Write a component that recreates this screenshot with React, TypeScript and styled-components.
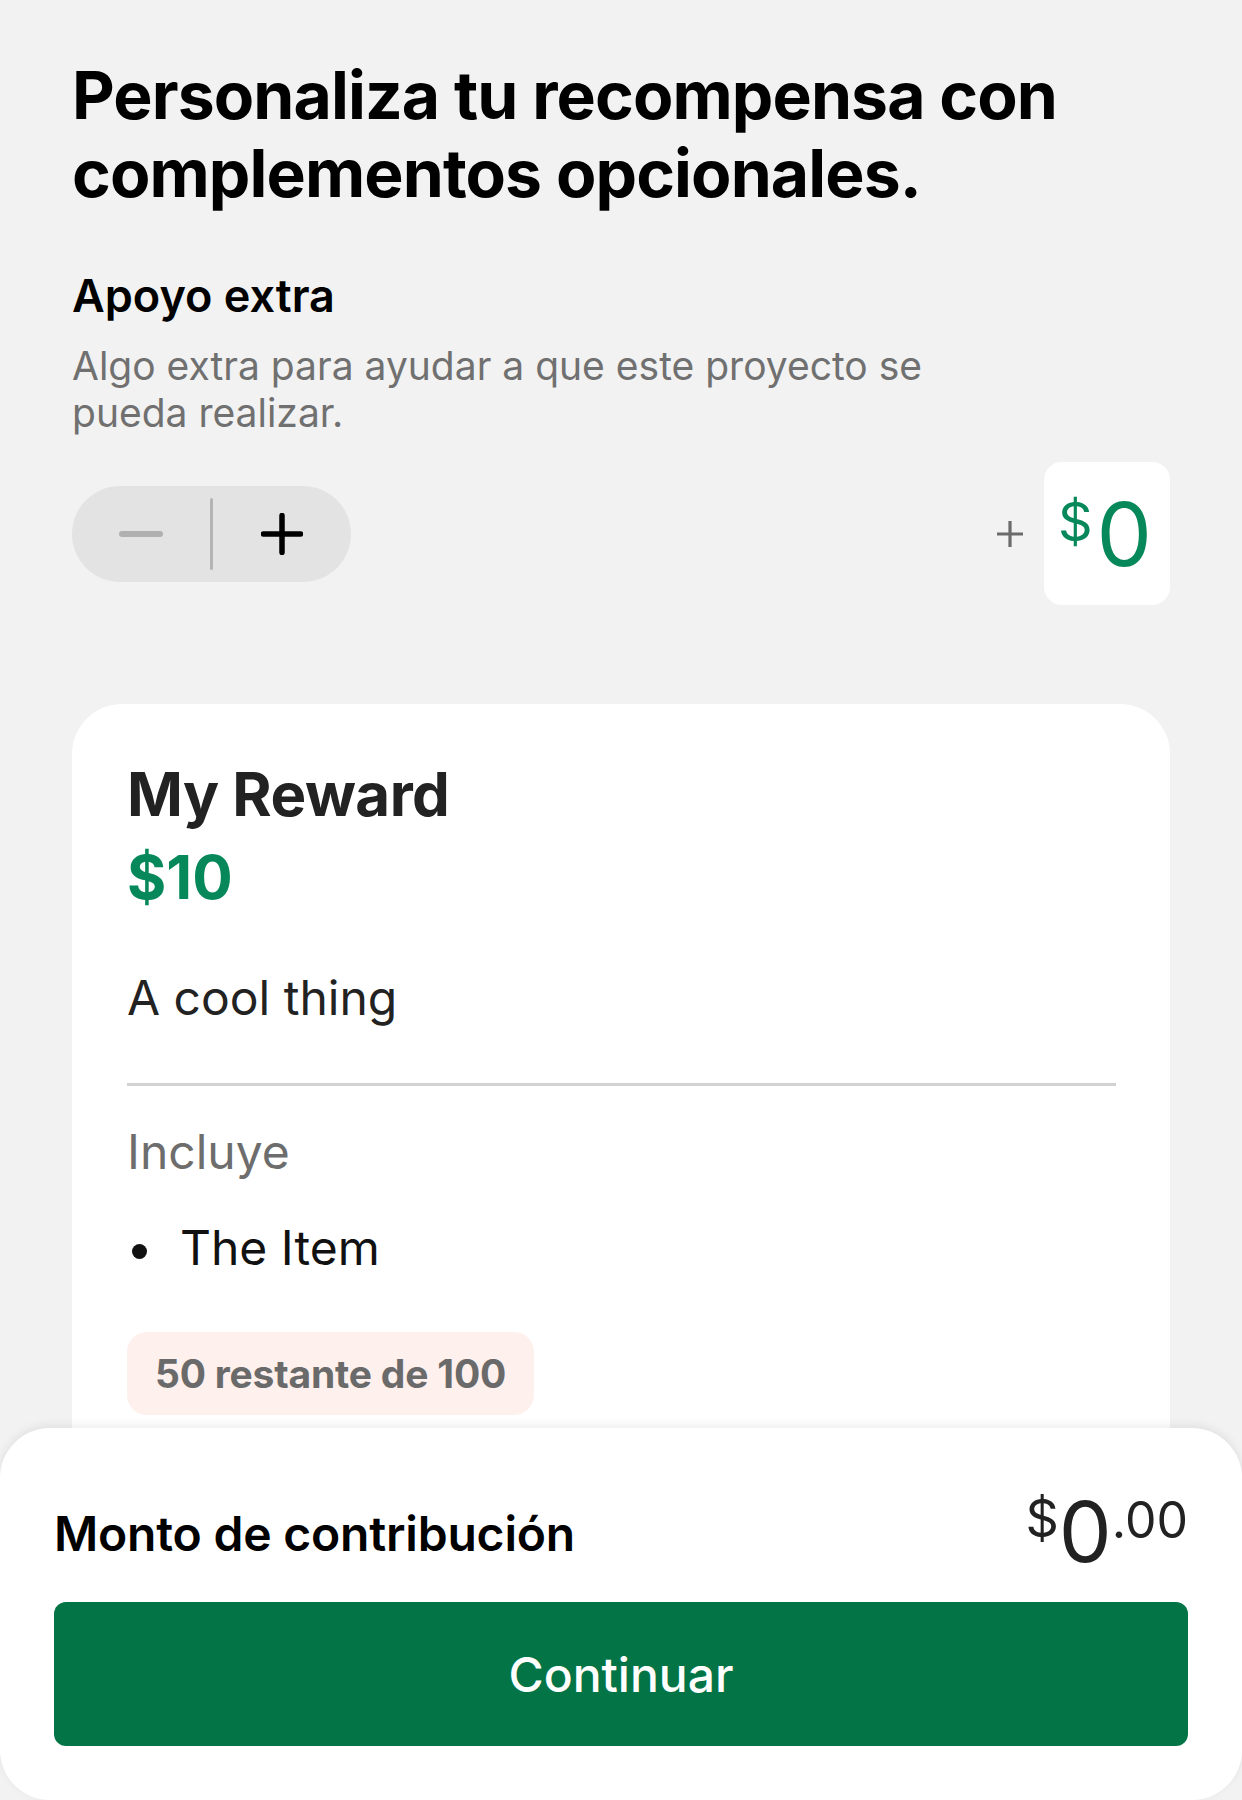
import React from "react";
import styled, { createGlobalStyle } from "styled-components";

const GlobalStyle = createGlobalStyle`
  html, body {
    margin: 0;
    padding: 0;
    background: #f2f2f2;
  }
  body {
    font-family: Inter, "Noto Sans", "Liberation Sans", sans-serif;
    -webkit-font-smoothing: antialiased;
  }
  * { box-sizing: border-box; }
`;

const GREEN = "#07885a";

const Page = styled.div`
  position: relative;
  width: 1242px;
  height: 1800px;
  overflow: hidden;
  background: #f2f2f2;
`;

const Content = styled.main`
  display: flex;
  flex-direction: column;
  padding: 56px 72px 0 72px;
`;

const Title = styled.h1`
  margin: 0;
  font-size: 66px;
  line-height: 78px;
  font-weight: 700;
  color: #000;
  letter-spacing: -0.9px;
`;

const SectionTitle = styled.h2`
  margin: 57px 0 0 0;
  font-size: 45px;
  line-height: 54px;
  font-weight: 600;
  color: #000;
`;

const Description = styled.p`
  margin: 19px 0 0 0;
  max-width: 900px;
  font-size: 39px;
  line-height: 47px;
  font-weight: 400;
  color: #707070;
`;

const AddOnRow = styled.div`
  margin-top: 26px;
  display: flex;
  align-items: center;
  justify-content: space-between;
`;

const Stepper = styled.div`
  width: 279px;
  height: 96px;
  border-radius: 48px;
  background: #e3e3e3;
  display: flex;
  align-items: center;
`;

const StepButton = styled.button`
  flex: 1;
  height: 100%;
  border: none;
  background: transparent;
  padding: 0;
  display: flex;
  align-items: center;
  justify-content: center;
  cursor: pointer;
`;

const StepDivider = styled.span`
  width: 3px;
  height: 72px;
  border-radius: 2px;
  background: #b4b4b4;
`;

const AmountGroup = styled.div`
  display: flex;
  align-items: center;
  gap: 20px;
`;

const AmountBox = styled.div`
  height: 143px;
  width: 126px;
  border-radius: 18px;
  background: #fff;
  display: flex;
  align-items: center;
  justify-content: center;
  padding: 0 4px 0 0;
`;

const Money = styled.span<{ $color: string }>`
  display: inline-flex;
  align-items: flex-start;
  color: ${(p) => p.$color};
  font-weight: 400;
`;

const Currency = styled.span<{ $size: number; $lh: number; $gap: number }>`
  font-size: ${(p) => p.$size}px;
  line-height: ${(p) => p.$lh}px;
  margin-right: ${(p) => p.$gap}px;
`;

const Whole = styled.span<{ $size: number }>`
  font-size: ${(p) => p.$size}px;
  line-height: ${(p) => p.$size}px;
`;

const Cents = styled.span`
  font-size: 50px;
  line-height: 60px;
`;

const Card = styled.section`
  margin-top: 99px;
  background: #fff;
  border-radius: 50px;
  padding: 54px 54px 300px 55px;
  display: flex;
  flex-direction: column;
`;

const RewardTitle = styled.h3`
  margin: 0;
  font-size: 60px;
  line-height: 72px;
  font-weight: 700;
  color: #222;
  letter-spacing: -0.5px;
`;

const RewardPrice = styled.div`
  margin-top: 11px;
  font-size: 60px;
  line-height: 72px;
  font-weight: 700;
  color: ${GREEN};
`;

const RewardText = styled.p<{ $muted?: boolean; $gap: number }>`
  margin: ${(p) => p.$gap}px 0 0 0;
  font-size: 48px;
  line-height: 58px;
  font-weight: 400;
  color: ${(p) => (p.$muted ? "#6d6d6d" : "#222")};
`;

const Rule = styled.hr`
  margin: 56px 0 0 0;
  border: none;
  height: 3px;
  background: #d2d2d2;
`;

const ItemList = styled.ul`
  margin: 38px 0 0 0;
  padding: 0;
  list-style: none;
`;

const Item = styled.li`
  display: flex;
  align-items: center;
  gap: 33px;
  font-size: 48px;
  line-height: 58px;
  color: #111;
`;

const Bullet = styled.span`
  width: 15px;
  height: 15px;
  border-radius: 50%;
  background: #111;
  margin-left: 5px;
  margin-top: 6px;
`;

const Badge = styled.div`
  margin-top: 55px;
  align-self: flex-start;
  padding: 18px 28px;
  border-radius: 20px;
  background: #fef0ec;
  color: #6a6a6a;
  font-size: 39px;
  line-height: 47px;
  font-weight: 700;
  letter-spacing: -0.2px;
`;

const Sheet = styled.footer`
  position: absolute;
  left: 0;
  right: 0;
  bottom: 0;
  height: 372px;
  background: #fff;
  border-radius: 50px;
  box-shadow: 0 -3px 10px rgba(0, 0, 0, 0.07);
  padding: 62px 54px 54px 54px;
  display: flex;
  flex-direction: column;
  gap: 28px;
`;

const TotalRow = styled.div`
  display: flex;
  align-items: center;
  justify-content: space-between;
  height: 84px;
`;

const TotalLabel = styled.span`
  font-size: 48px;
  line-height: 56px;
  font-weight: 600;
  color: #000;
  margin-top: 4px;
  letter-spacing: -0.2px;
`;

const ContinueButton = styled.button`
  height: 144px;
  width: 100%;
  border: none;
  border-radius: 12px;
  background: #037446;
  color: #fff;
  font-family: inherit;
  font-size: 48px;
  font-weight: 500;
  cursor: pointer;
`;

const PlusIcon = () => (
  <svg width="42" height="42" viewBox="0 0 42 42">
    <path d="M21 2.5v37M2.5 21h37" stroke="#000" strokeWidth="5.5" strokeLinecap="round" fill="none" />
  </svg>
);

const MinusIcon = () => (
  <svg width="44" height="10" viewBox="0 0 44 10">
    <path d="M3 5h38" stroke="#b0b0b0" strokeWidth="6" strokeLinecap="round" fill="none" />
  </svg>
);

const AddSign = () => (
  <svg width="28" height="28" viewBox="0 0 28 28" aria-label="más">
    <path d="M14 1v26M1 14h26" stroke="#6b6b6b" strokeWidth="3.2" fill="none" />
  </svg>
);

export default function App() {
  return (
    <>
      <GlobalStyle />
      <Page>
        <Content>
          <Title>
            Personaliza tu recompensa con
            <br />
            complementos opcionales.
          </Title>
          <SectionTitle>Apoyo extra</SectionTitle>
          <Description>Algo extra para ayudar a que este proyecto se pueda realizar.</Description>
          <AddOnRow>
            <Stepper>
              <StepButton aria-label="Disminuir">
                <MinusIcon />
              </StepButton>
              <StepDivider />
              <StepButton aria-label="Aumentar">
                <PlusIcon />
              </StepButton>
            </Stepper>
            <AmountGroup>
              <AddSign />
              <AmountBox>
                <Money $color={GREEN}>
                  <Currency $size={54} $lh={64} $gap={4}>$</Currency>
                  <Whole $size={88}>0</Whole>
                </Money>
              </AmountBox>
            </AmountGroup>
          </AddOnRow>
          <Card>
            <RewardTitle>My Reward</RewardTitle>
            <RewardPrice>$10</RewardPrice>
            <RewardText $gap={56}>A cool thing</RewardText>
            <Rule />
            <RewardText $muted $gap={37}>
              Incluye
            </RewardText>
            <ItemList>
              <Item>
                <Bullet />
                The Item
              </Item>
            </ItemList>
            <Badge>50 restante de 100</Badge>
          </Card>
        </Content>
        <Sheet>
          <TotalRow>
            <TotalLabel>Monto de contribución</TotalLabel>
            <Money $color="#222">
              <Currency $size={52} $lh={58} $gap={0}>$</Currency>
              <Whole $size={84}>0</Whole>
              <Cents>.00</Cents>
            </Money>
          </TotalRow>
          <ContinueButton>Continuar</ContinueButton>
        </Sheet>
      </Page>
    </>
  );
}
